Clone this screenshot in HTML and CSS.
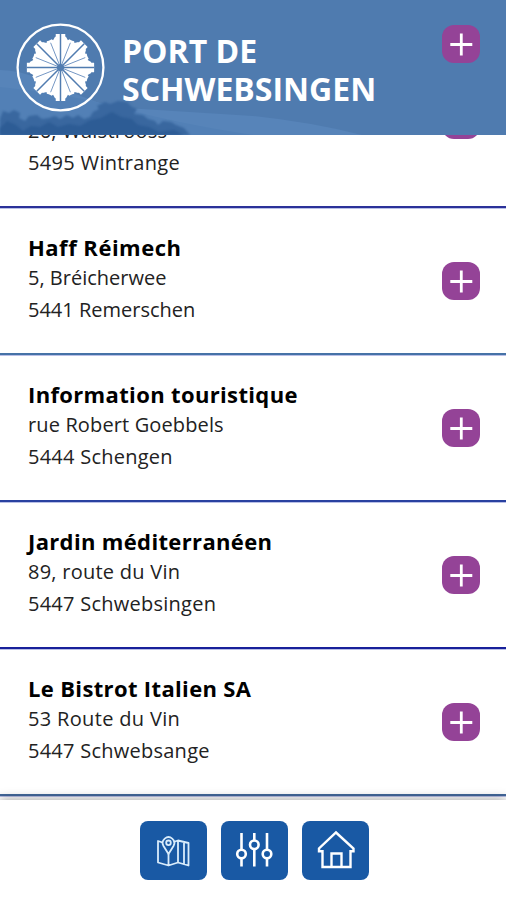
FILE: index.html
```html
<!DOCTYPE html>
<html lang="fr">
<head>
<meta charset="utf-8">
<meta name="viewport" content="width=device-width, initial-scale=1">
<title>Port de Schwebsingen</title>
<link rel="stylesheet" href="styles.css">
</head>
<body>
<svg width="0" height="0" class="defs"><defs>
<symbol id="plus" viewBox="0 0 38 38"><path d="M19.3 8.5v22M8.3 19.5h22" fill="none" stroke="#fff" stroke-width="2.8"/></symbol>
<g id="blade">
<path d="M0 0L-11.500-27-9-28.500-7.500-27.500-5.500-31H-4.800V-34H4.800V-31H5.500L7.500-27.500 9-28.500 11.500-27Z" fill="#fff"/>
</g>
</defs></svg>
<div class="app">
<header class="header">
<svg class="scene" viewBox="0 0 506 135" preserveAspectRatio="none">
<path d="M0 70Q20 70 42 80T110 107L253 116Q310 122 362 135H0Z" fill="#5784b9"/>
<path d="M0 87Q70 94 125 109T253 135H0Z" fill="#5280b6"/>
<path class="trees" d="M0 119L3 111 9 113 14 110 20 113 19 118 25 121 29 116 37 115 42 119 49 118 55 116 60 119 67 115 73 118 78 115 84 119 90 117 93 112 99 109 97 106 105 102 110 104 118 101 127 102 132 107 137 109 134 114 143 115 148 119 155 121 158 125 163 121 171 122 176 125 184 128 190 135H0Z" fill="#39679f"/>
<path class="trees" d="M0 128L7 121 16 125 23 131 31 126 40 127 49 122 58 127 69 124 80 126 91 120 101 118 112 112 121 117 132 119 138 125 149 127 159 132 174 130 184 135H0Z" fill="#2d5c95"/>
</svg>
<svg class="logo" viewBox="-45 -45 90 90">
<circle r="43.4" fill="none" stroke="#fff" stroke-width="2.3"/>
<use href="#blade"/><use href="#blade" transform="rotate(45)"/><use href="#blade" transform="rotate(90)"/><use href="#blade" transform="rotate(135)"/><use href="#blade" transform="rotate(180)"/><use href="#blade" transform="rotate(225)"/><use href="#blade" transform="rotate(270)"/><use href="#blade" transform="rotate(315)"/>
<path d="M0-34V34M-34 0H34M-24-24L24 24M-24 24L24-24" stroke="#517cb0" stroke-width="1.5"/>
<path d="M-10-25L10 25M10-25L-10 25M-25-10L25 10M-25 10L25-10" stroke="#7698c4" stroke-width="1"/>
<circle r="3.6" fill="#517cb0"/>
</svg>
<h1 class="brand">PORT DE<br>SCHWEBSINGEN</h1>
<svg class="add add-header"><use href="#plus"/></svg>
</header>
<main class="list">
<article class="row row-cut"><div><p>26, Walstrooss</p><p class="wide">5495 Wintrange</p></div><svg class="add"><use href="#plus"/></svg></article>
<article class="row line-b"><div><h2 class="wider">Haff Réimech</h2><p class="tight">5, Bréicherwee</p><p class="tight">5441 Remerschen</p></div><svg class="add"><use href="#plus"/></svg></article>
<article class="row line-c"><div><h2>Information touristique</h2><p class="snug">rue Robert Goebbels</p><p>5444 Schengen</p></div><svg class="add"><use href="#plus"/></svg></article>
<article class="row line-d"><div><h2>Jardin méditerranéen</h2><p>89, route du Vin</p><p>5447 Schwebsingen</p></div><svg class="add"><use href="#plus"/></svg></article>
<article class="row line-e"><div><h2>Le Bistrot Italien SA</h2><p class="wide">53 Route du Vin</p><p>5447 Schwebsange</p></div><svg class="add"><use href="#plus"/></svg></article>
</main>
<nav class="nav">
<a class="tab"><svg viewBox="0 0 67 59" fill="none" stroke="#d9ecfb" stroke-width="1.8" stroke-linejoin="round"><path d="M22.5 21.5L18 20V41.5L28.5 44.5 38 41.5 48.5 44.5V22L38 19.5 33.5 21M28.500 33V44.500M38 19.500V41.500M44 21.500V43"/><path d="M28.500 33L23.500 25A5.800 5.800 0 1 1 33.500 25Z"/><circle cx="28.500" cy="21.800" r="2.300"/></svg></a>
<a class="tab"><svg viewBox="0 0 67 59" fill="none" stroke="#fff" stroke-width="2.6"><path d="M20.500 12V28M20.500 37.500V45.500M33.300 12V19M33.300 28.500V45.500M46 12V28M46 37.500V45.500"/><circle cx="20.500" cy="33" r="4.300"/><circle cx="33.300" cy="23.800" r="4.300"/><circle cx="46" cy="33" r="4.300"/></svg></a>
<a class="tab"><svg viewBox="0 0 67 59" fill="none" stroke="#fff" stroke-width="2.400"><path d="M20.500 30.200H17V27.500L34 11.500 51.500 27.500V30.200H48.500V46H20.500Z"/><path d="M29.500 46V32.500H39.500V46"/></svg></a>
</nav>
</div>
</body>
</html>
```

FILE: styles.css
```css
* { box-sizing: border-box; }
body { margin: 0; font-family: "Open Sans", sans-serif; background: #fff; color: #222; }
h1, h2, p { margin: 0; white-space: nowrap; }
.defs { position: absolute; }
.app { height: 900px; display: flex; flex-direction: column; overflow: hidden; }
.header { position: relative; z-index: 2; flex: 0 0 135px; display: flex; align-items: flex-start; background: #4f7baf; padding: 0 26px 0 16px; overflow: hidden; }
.scene { position: absolute; inset: 0; width: 100%; height: 100%; }
.trees { filter: blur(1px); }
.logo { position: relative; width: 89px; height: 89px; margin-top: 23px; flex: none; }
.brand { position: relative; margin: 32px auto 0 17px; color: #fff; font-size: 32px; line-height: 38px; font-weight: 700; }
.add { width: 38px; height: 38px; flex: none; border-radius: 12px; background: #944397; }
.add-header { position: relative; margin-top: 25px; }
.list { flex: 0 0 665px; overflow: hidden; display: flex; flex-direction: column; justify-content: flex-end; padding-bottom: 4px; }
.row { flex: 0 0 147.1px; display: flex; justify-content: space-between; align-items: center; padding: 2px 26px 0 28px; border-bottom: 2px solid #2b3199; box-shadow: 0 1px 0 #b9bfe6; }
.row > div { padding-bottom: 4px; }
.row h2 { font-size: 22px; line-height: 30px; font-weight: 700; color: #000; letter-spacing: .35px; }
.row p { font-size: 20px; line-height: 32px; letter-spacing: .25px; }
.row h2.wider { letter-spacing: .5px; }
.row p.wide { letter-spacing: .33px; }
.row p.snug { letter-spacing: .13px; }
.row p.tight { letter-spacing: 0; }
.row-cut { flex-basis: 176px; }
.row-cut > div { padding: 55px 0 0; }
.line-b { border-color: #4672a7; }
.line-c { border-color: #2941a0; }
.line-d { border-color: #18209a; }
.line-e { border-color: #43689b; }
.nav { position: relative; z-index: 1; flex: 1; background: #fff; box-shadow: 0 -1px 10px rgba(0, 0, 0, .35); display: flex; justify-content: center; gap: 14px; padding: 21px 0 0 2px; }
.tab { width: 67px; height: 59px; border-radius: 8px; background: #1959a4; }
.tab svg { display: block; width: 67px; height: 59px; }
```
